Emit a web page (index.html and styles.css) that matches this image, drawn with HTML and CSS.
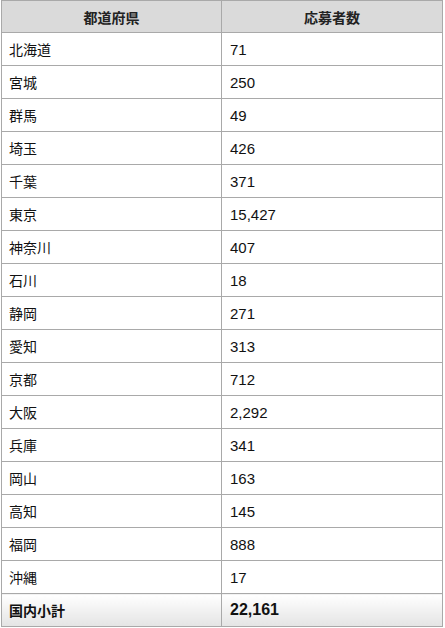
FILE: index.html
```html
<!DOCTYPE html>
<html lang="ja">
<head>
<meta charset="utf-8">
<link rel="stylesheet" href="styles.css">
</head>
<body>
<table class="tbl">
<thead>
<tr><th>都道府県</th><th>応募者数</th></tr>
</thead>
<tbody>
<tr><td>北海道</td><td>71</td></tr>
<tr><td>宮城</td><td>250</td></tr>
<tr><td>群馬</td><td>49</td></tr>
<tr><td>埼玉</td><td>426</td></tr>
<tr><td>千葉</td><td>371</td></tr>
<tr><td>東京</td><td>15,427</td></tr>
<tr><td>神奈川</td><td>407</td></tr>
<tr><td>石川</td><td>18</td></tr>
<tr><td>静岡</td><td>271</td></tr>
<tr><td>愛知</td><td>313</td></tr>
<tr><td>京都</td><td>712</td></tr>
<tr><td>大阪</td><td>2,292</td></tr>
<tr><td>兵庫</td><td>341</td></tr>
<tr><td>岡山</td><td>163</td></tr>
<tr><td>高知</td><td>145</td></tr>
<tr><td>福岡</td><td>888</td></tr>
<tr><td>沖縄</td><td>17</td></tr>
<tr class="total"><td>国内小計</td><td>22,161</td></tr>
</tbody>
</table>
</body>
</html>
```
FILE: styles.css
```css
html, body {
  margin: 0;
  padding: 0;
  background: #ffffff;
}
.tbl {
  margin: 0 0 0 1px;
  width: 442px;
  border-collapse: collapse;
  table-layout: fixed;
  font-family: "Liberation Sans", "Noto Sans CJK JP", sans-serif;
  font-size: 15px;
  color: #111;
}
.tbl th, .tbl td {
  border: 1px solid #a9a9a9;
  height: 33px;
  padding: 0 0 0 8px;
  box-sizing: border-box;
  text-align: left;
  vertical-align: middle;
}
.tbl td:first-child {
  padding-left: 7px;
  font-size: 14px;
}
.tbl th {
  height: 32px;
  background: #dadada;
  text-align: center;
  padding: 0;
  font-weight: bold;
  font-size: 14px;
  color: #222;
}
.tbl th:first-child, .tbl td:first-child {
  width: 220px;
}
.tbl .total td {
  font-weight: bold;
  background: linear-gradient(#ffffff, #e4e4e4);
}
.tbl .total td:last-child {
  font-size: 16px;
}
```
